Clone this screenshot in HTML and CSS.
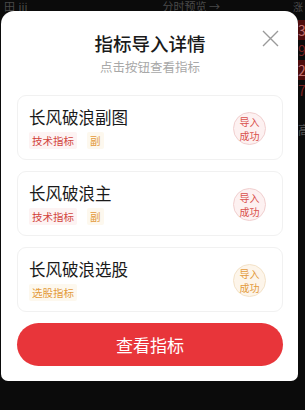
FILE: index.html
```html
<!DOCTYPE html>
<html lang="zh">
<head>
<meta charset="utf-8">
<link rel="stylesheet" href="styles.css">
</head>
<body>
<div class="screen">
  <div class="bg-top">
    <span class="bg-left">田 ⅲ</span>
    <span class="bg-mid">分时预览 →</span>
    <span class="bg-right">涨</span>
  </div>
  <div class="bg-side">
    <span class="side-cell red">3</span>
    <span class="side-cell">9</span>
    <span class="side-cell red">2</span>
    <span class="side-cell">7</span>
    <span class="side-cell"></span>
    <span class="side-cell grey">高</span>
  </div>

  <div class="modal">
    <svg class="close" width="17" height="17" viewBox="0 0 17 17">
      <path d="M1 1 L16 16 M16 1 L1 16" stroke="#9a9a9a" stroke-width="1.4" fill="none"/>
    </svg>
    <div class="head">
      <div class="title">指标导入详情</div>
      <div class="subtitle">点击按钮查看指标</div>
    </div>
    <div class="list">
      <div class="card">
        <div class="info">
          <div class="name">长风破浪副图</div>
          <div class="tags">
            <span class="tag tag-red">技术指标</span>
            <span class="tag tag-orange">副</span>
          </div>
        </div>
        <div class="badge badge-red"><span>导入</span><span>成功</span></div>
      </div>
      <div class="card">
        <div class="info">
          <div class="name">长风破浪主</div>
          <div class="tags">
            <span class="tag tag-red">技术指标</span>
            <span class="tag tag-orange">副</span>
          </div>
        </div>
        <div class="badge badge-red"><span>导入</span><span>成功</span></div>
      </div>
      <div class="card">
        <div class="info">
          <div class="name">长风破浪选股</div>
          <div class="tags">
            <span class="tag tag-orange">选股指标</span>
          </div>
        </div>
        <div class="badge badge-orange"><span>导入</span><span>成功</span></div>
      </div>
    </div>
    <div class="btn">查看指标</div>
  </div>
</div>
</body>
</html>
```

FILE: styles.css
```css
* { box-sizing: border-box; }
html, body {
  margin: 0;
  padding: 0;
  background: #0b0b0b;
}
body {
  font-family: "Noto Sans CJK SC", "Noto Sans", sans-serif;
  width: 305px;
  height: 410px;
  overflow: hidden;
}
.screen {
  position: relative;
  width: 305px;
  height: 410px;
  background: #0b0b0b;
}
.bg-top {
  display: flex;
  align-items: flex-start;
  height: 16px;
  font-size: 11px;
  line-height: 13px;
  color: #4a4a4a;
}
.bg-left { margin-left: 4px; }
.bg-mid { margin-left: 134px; }
.bg-right { margin-left: auto; margin-right: 2px; font-size: 10px; }
.bg-side {
  display: flex;
  flex-direction: column;
  margin-left: 298px;
  margin-top: 4px;
  width: 7px;
}
.side-cell {
  height: 20px;
  font-size: 14px;
  line-height: 20px;
  color: #7a2020;
  overflow: hidden;
}
.side-cell.red { background: #4e0c0c; color: #c07070; }
.side-cell.grey { color: #555; font-size: 12px; }

.modal {
  position: absolute;
  left: 1px;
  top: 11px;
  width: 297px;
  height: 370px;
  background: #fff;
  border-radius: 13px 13px 7px 7px;
  padding: 19px 15px 15px 16px;
  display: flex;
  flex-direction: column;
}
.close {
  position: absolute;
  right: 19px;
  top: 19px;
}
.head {
  display: flex;
  flex-direction: column;
  align-items: center;
  gap: 2px;
}
.title {
  font-size: 18.5px;
  line-height: 26px;
  font-weight: 500;
  color: #1a1a1a;
}
.subtitle {
  font-size: 12.5px;
  line-height: 18px;
  color: #a8a8a8;
}
.list {
  margin-top: 19px;
  display: flex;
  flex-direction: column;
  gap: 11px;
}
.card {
  height: 65px;
  border: 1px solid #f1f1f1;
  border-radius: 9px;
  padding: 10px 16px 0 11px;
  display: flex;
  justify-content: space-between;
  align-items: flex-start;
}
.info {
  display: flex;
  flex-direction: column;
  gap: 4px;
}
.name {
  font-size: 16.5px;
  line-height: 22px;
  color: #1a1a1a;
}
.tags {
  display: flex;
  gap: 10px;
}
.tag {
  font-size: 10.5px;
  line-height: 17px;
  padding: 0 3px;
  border-radius: 2px;
}
.tag-red { color: #d2443e; background: #fdf3f3; }
.tag-orange { color: #e39a3a; background: #fdf8ee; }
.badge {
  width: 33px;
  height: 33px;
  margin-top: 6px;
  border-radius: 50%;
  font-size: 10px;
  line-height: 14px;
  display: flex;
  flex-direction: column;
  align-items: center;
  justify-content: center;
  text-align: center;
}
.badge-red {
  background: #fdf1f1;
  border: 1px solid #f1cfcf;
  color: #d9504c;
}
.badge-orange {
  background: #fdf5ea;
  border: 1px solid #f3e2c8;
  color: #e39a3a;
}
.btn {
  margin-top: 11px;
  height: 43px;
  border-radius: 22px;
  background: #e8353a;
  color: #fff;
  font-size: 17px;
  display: flex;
  align-items: center;
  justify-content: center;
}
```
